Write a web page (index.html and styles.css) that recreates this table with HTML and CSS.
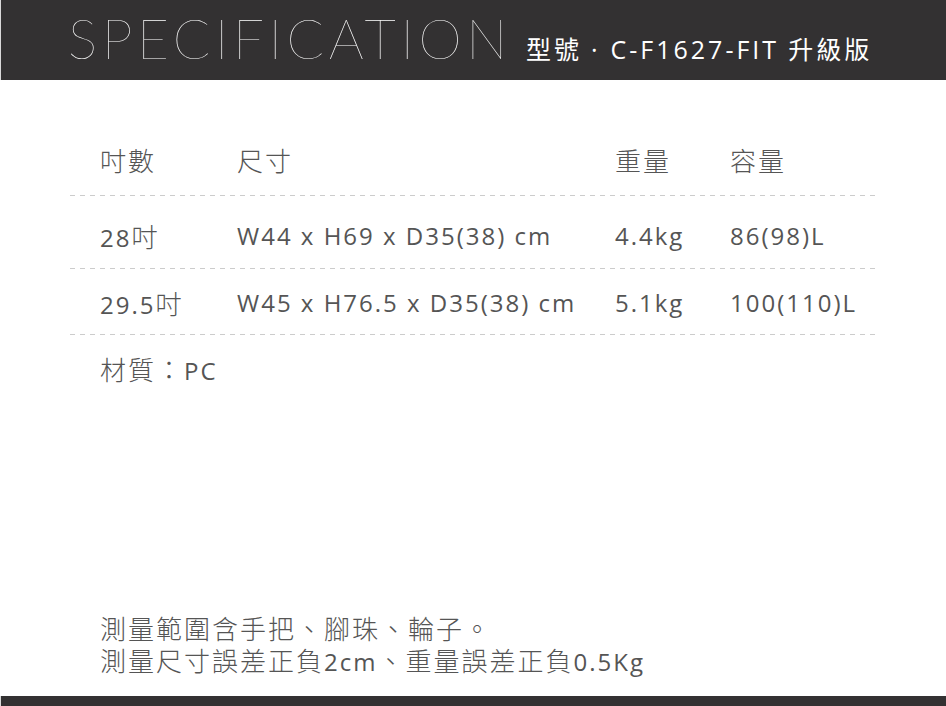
FILE: index.html
```html
<!DOCTYPE html>
<html lang="zh-Hant">
<head>
<meta charset="utf-8">
<title>Specification</title>
<link rel="stylesheet" href="styles.css">
</head>
<body>
<header class="top">
  <h1 class="title">SPECIFICATION</h1>
  <p class="model"><span class="cj">型號</span><span class="dot">·</span>C-F1627-FIT<span class="cj up">升級版</span></p>
</header>
<main class="spec">
  <div class="row head">
    <div class="cell cj">吋數</div>
    <div class="cell cj">尺寸</div>
    <div class="cell cj">重量</div>
    <div class="cell cj">容量</div>
  </div>
  <div class="row r1">
    <div class="cell">28<span class="cj">吋</span></div>
    <div class="cell">W44 x H69 x D35(38) cm</div>
    <div class="cell">4.4kg</div>
    <div class="cell">86(98)L</div>
  </div>
  <div class="row r2">
    <div class="cell">29.5<span class="cj">吋</span></div>
    <div class="cell">W45 x H76.5 x D35(38) cm</div>
    <div class="cell">5.1kg</div>
    <div class="cell">100(110)L</div>
  </div>
  <div class="material"><span class="cj">材質：</span>PC</div>
</main>
<section class="notes">
  <p class="note"><span class="cj">測量範圍含手把、腳珠、輪子。</span></p>
  <p class="note"><span class="cj">測量尺寸誤差正負</span>2cm<span class="cj">、重量誤差正負</span>0.5Kg</p>
</section>
<footer class="bottom"></footer>
</body>
</html>
```
FILE: styles.css
```css
html, body {
  margin: 0;
  padding: 0;
  background: #ffffff;
}
body {
  width: 946px;
  height: 706px;
  display: flex;
  flex-direction: column;
  font-family: "Open Sans", "Noto Sans CJK TC", sans-serif;
  color: #555555;
  overflow: hidden;
}
.cj {
  font-family: "Noto Sans CJK TC", sans-serif;
  font-weight: 300;
  font-size: 26px;
  letter-spacing: 2px;
}
.top {
  height: 80px;
  box-sizing: border-box;
  background: #333132;
  border-left: 1px solid #d9d9d9;
  display: flex;
  align-items: baseline;
  padding-left: 67px;
  flex-shrink: 0;
}
.title {
  margin: 0;
  font-family: "Lato", sans-serif;
  font-weight: 100;
  font-size: 55px;
  line-height: 76px;
  letter-spacing: 4.6px;
  color: #ffffff;
}
.model {
  margin: 0 0 0 14px;
  font-family: "Open Sans", sans-serif;
  font-weight: 500;
  font-size: 25px;
  letter-spacing: 3px;
  color: #ffffff;
}
.model .cj {
  font-weight: 400;
  font-size: 25px;
  letter-spacing: 3px;
}
.model .dot {
  margin: 0 10px 0 9px;
  font-weight: 400;
}
.model .up {
  margin-left: 9px;
}
.spec {
  margin: 44px 70px 0 70px;
  width: 806px;
}
.row {
  display: grid;
  grid-template-columns: 137px 378px 115px 1fr;
  padding-left: 30px;
  font-size: 24px;
  line-height: 26px;
  letter-spacing: 2px;
  background-image: linear-gradient(to right, #cccccc 50%, transparent 50%);
  background-size: 10px 1px;
  background-repeat: repeat-x;
  background-position: left bottom;
}
.cell {
  white-space: nowrap;
}
.head {
  padding-top: 23px;
  padding-bottom: 23px;
}
.r1 {
  padding-top: 27px;
  padding-bottom: 18px;
}
.r2 {
  padding-top: 21px;
  padding-bottom: 17px;
}
.material {
  padding: 21px 0 0 30px;
  font-size: 24px;
  line-height: 26px;
  letter-spacing: 2px;
}
.material .cj {
  letter-spacing: 2px;
}
.notes {
  margin: auto 0 19px 100px;
}
.note {
  margin: 0;
  font-size: 24px;
  line-height: 30px;
  letter-spacing: 2px;
}
.bottom {
  height: 10px;
  background: #333132;
  border-left: 1px solid #d9d9d9;
  flex-shrink: 0;
}
```
